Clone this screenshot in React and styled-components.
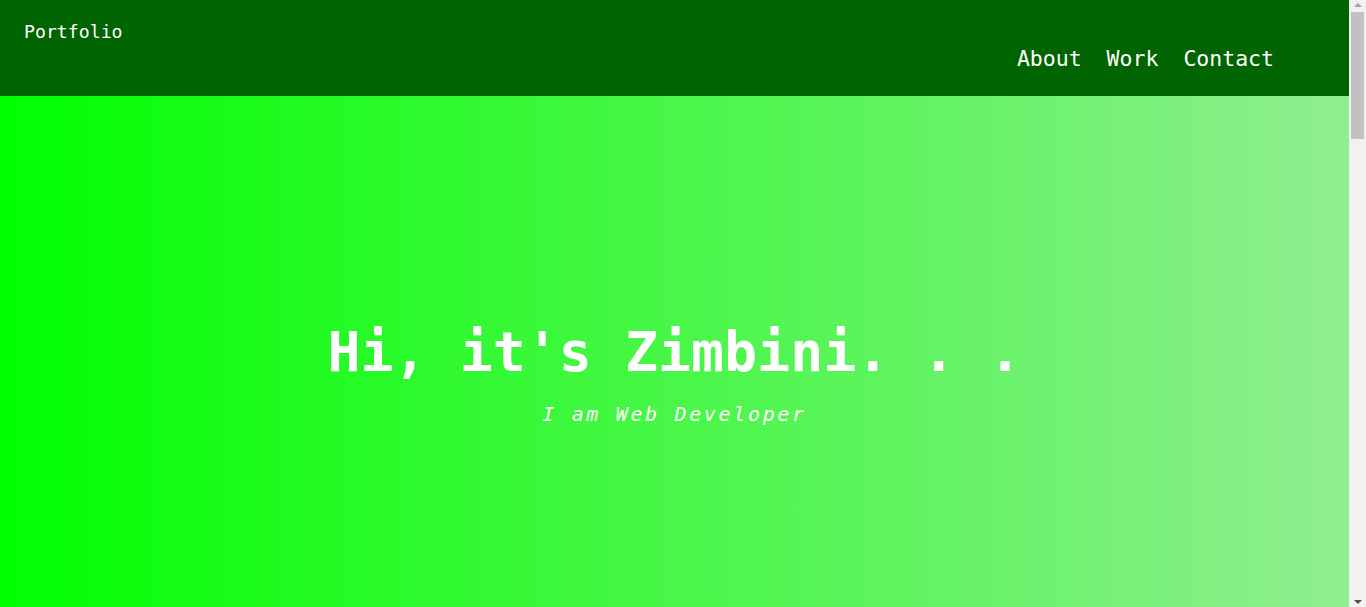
import React from "react";
import styled, { createGlobalStyle } from "styled-components";

const Global = createGlobalStyle`
  html, body { margin: 0; padding: 0; height: 100%; overflow: hidden; }
  body {
    font-family: "DejaVu Sans Mono", "Liberation Mono", monospace;
    color: #ffffff;
    background: #ffffff;
  }
  * { box-sizing: border-box; }
`;

const Shell = styled.div`
  display: flex;
  height: 100vh;
  width: 100vw;
`;

const Main = styled.main`
  flex: 1;
  display: flex;
  flex-direction: column;
  min-width: 0;
`;

const Header = styled.header`
  height: 96px;
  flex-shrink: 0;
  background: #006400;
  display: flex;
  justify-content: space-between;
  align-items: flex-start;
  padding: 0 75px 0 24px;
`;

const Logo = styled.div`
  font-size: 18.2px;
  line-height: 22px;
  margin-top: 21px;
`;

const Nav = styled.nav`
  display: flex;
  gap: 25px;
  margin-top: 46px;
`;

const NavLink = styled.a`
  color: #ffffff;
  text-decoration: none;
  font-size: 21.5px;
  line-height: 25px;
`;

const Hero = styled.section`
  flex: 1;
  background: linear-gradient(to right, #00ff00, #90ee90);
  display: flex;
  flex-direction: column;
  align-items: center;
  padding-top: 224px;
`;

const Title = styled.h1`
  margin: 0;
  font-size: 54.9px;
  line-height: 64px;
  font-weight: bold;
  color: #ffffff;
`;

const Subtitle = styled.p`
  margin: 18px 0 0;
  font-size: 20px;
  line-height: 24px;
  font-style: italic;
  letter-spacing: 2.65px;
  color: #ffffff;
`;

const ScrollTrack = styled.div`
  width: 17px;
  flex-shrink: 0;
  background: #f1f1f1;
  display: flex;
  flex-direction: column;
  align-items: center;
  padding-top: 3px;
`;

const Arrow = styled.div`
  width: 0;
  height: 0;
  border-left: 4px solid transparent;
  border-right: 4px solid transparent;
  ${(p) =>
    p.$down
      ? `border-top: 4px solid #505050; margin-top: auto; margin-bottom: 3px;`
      : `border-bottom: 4px solid #a3a3a3;`}
`;

const Thumb = styled.div`
  width: 13px;
  height: 127px;
  margin-top: 5px;
  background: #c1c1c1;
`;

export default function App() {
  return (
    <>
      <Global />
      <Shell>
        <Main>
          <Header>
            <Logo>Portfolio</Logo>
            <Nav>
              <NavLink href="#about">About</NavLink>
              <NavLink href="#work">Work</NavLink>
              <NavLink href="#contact">Contact</NavLink>
            </Nav>
          </Header>
          <Hero>
            <Title>Hi, it's Zimbini. . .</Title>
            <Subtitle>I am Web Developer</Subtitle>
          </Hero>
        </Main>
        <ScrollTrack>
          <Arrow />
          <Thumb />
          <Arrow $down />
        </ScrollTrack>
      </Shell>
    </>
  );
}
